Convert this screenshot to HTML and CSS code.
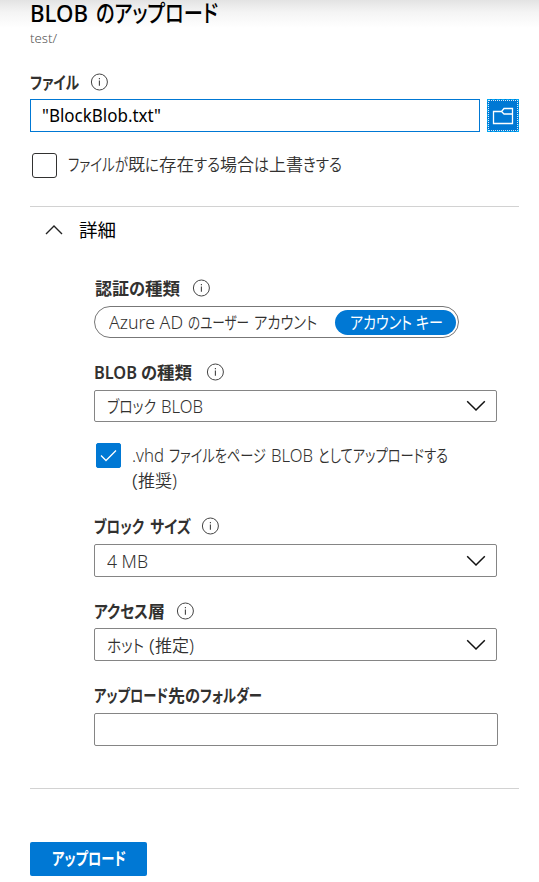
FILE: index.html
```html
<!DOCTYPE html>
<html lang="ja">
<head>
<meta charset="utf-8">
<title>BLOB のアップロード</title>
<link rel="stylesheet" href="styles.css">
</head>
<body>
<svg class="defs" aria-hidden="true">
  <symbol id="info" viewBox="0 0 18 18"><circle cx="9.4" cy="9" r="8" fill="none" stroke="#444" stroke-width="1"/><path d="M9.4 7.4V12.8M9.4 4.9V6.2" fill="none" stroke="#444" stroke-width="1.1"/></symbol>
  <symbol id="down" viewBox="0 0 20 12"><path d="M1.2 1.2L10 10L18.8 1.2" fill="none" stroke="#111" stroke-width="1.5"/></symbol>
</svg>
<main class="panel">
  <h1 class="line title"><span class="run" data-w="58">BLOB</span><span class="run" data-g="8" data-w="122">のアップロード</span></h1>
  <div class="line path"><span class="run" data-w="27">test/</span></div>

  <div class="line label file-label"><span class="run" data-w="49">ファイル</span><svg class="info" data-g="11"><use href="#info"/></svg></div>
  <div class="file-row">
    <div class="line file-input"><span class="run" data-w="119">"BlockBlob.txt"</span></div>
    <button class="browse" aria-label="参照"><svg class="folder" viewBox="0 0 22 18"><path d="M10 4.5H1.5V16.5H20.5V1.5H12L9.5 4.5L12 7H20.5" fill="none" stroke="#fff" stroke-width="1.3"/></svg></button>
  </div>
  <div class="check-row overwrite">
    <span class="box"></span>
    <div class="line"><span class="run" data-w="60">ファイルが</span><span class="run" data-w="17">既</span><span class="run" data-w="14">に</span><span class="run" data-w="35">存在</span><span class="run" data-w="26">する</span><span class="run" data-w="34">場合</span><span class="run" data-w="15">は</span><span class="run" data-w="34">上書</span><span class="run" data-w="39">きする</span></div>
  </div>

  <hr class="rule rule-top">
  <div class="line details"><svg class="up" viewBox="0 0 18 12"><path d="M1 10L9 2L17 10" fill="none" stroke="#222" stroke-width="1.4"/></svg><span class="run" data-w="37">詳細</span></div>

  <section class="section">
    <div class="line label auth-label"><span class="run" data-g="1" data-w="34">認証</span><span class="run" data-w="16">の</span><span class="run" data-w="35">種類</span><svg class="info" data-g="12"><use href="#info"/></svg></div>
    <div class="pill">
      <div class="line option"><span class="run" data-w="74">Azure AD</span><span class="run" data-g="5" data-w="61">のユーザー</span><span class="run" data-g="5" data-w="63">アカウント</span></div>
      <div class="line option selected"><span class="run" data-w="62">アカウント</span><span class="run" data-g="4" data-w="27">キー</span></div>
    </div>

    <div class="line label type-label"><span class="run" data-w="43">BLOB</span><span class="run" data-g="4" data-w="16">の</span><span class="run" data-w="35">種類</span><svg class="info" data-g="13.6"><use href="#info"/></svg></div>
    <div class="select short"><div class="line"><span class="run" data-w="49">ブロック</span><span class="run" data-g="5" data-w="42">BLOB</span></div><svg class="down"><use href="#down"/></svg></div>

    <div class="check-row vhd">
      <span class="box checked"><svg class="tick" viewBox="0 0 17 13"><path d="M1 6.5L6 11.5L16 1.5" fill="none" stroke="#fff" stroke-width="1.3"/></svg></span>
      <div>
        <div class="line"><span class="run" data-w="32">.vhd</span><span class="run" data-g="5" data-w="97">ファイルをページ</span><span class="run" data-g="5" data-w="42">BLOB</span><span class="run" data-g="5" data-w="130">としてアップロードする</span></div>
        <div class="line"><span class="run" data-w="6">(</span><span class="run" data-w="34">推奨</span><span class="run" data-w="5">)</span></div>
      </div>
    </div>

    <div class="line label size-label"><span class="run" data-w="50">ブロック</span><span class="run" data-g="6" data-w="41">サイズ</span><svg class="info" data-g="10"><use href="#info"/></svg></div>
    <div class="select"><div class="line"><span class="run" data-w="41">4 MB</span></div><svg class="down"><use href="#down"/></svg></div>

    <div class="line label tier-label"><span class="run" data-w="54">アクセス</span><span class="run" data-w="17">層</span><svg class="info" data-g="11"><use href="#info"/></svg></div>
    <div class="select tier"><div class="line"><span class="run" data-w="37">ホット</span><span class="run" data-g="5" data-w="6">(</span><span class="run" data-w="34">推定</span><span class="run" data-w="5">)</span></div><svg class="down"><use href="#down"/></svg></div>

    <div class="line label folder-label"><span class="run" data-w="74">アップロード</span><span class="run" data-w="17">先</span><span class="run" data-w="15">の</span><span class="run" data-w="62">フォルダー</span></div>
    <div class="folder-input"></div>
  </section>

  <hr class="rule rule-bottom">
  <button class="line upload"><span class="run" data-w="74">アップロード</span></button>
</main>
<script src="script.js"></script>
</body>
</html>
```
FILE: styles.css
```css
* { box-sizing: border-box; }
body {
  margin: 0;
  background: #fff linear-gradient(#e3e3e3, #f4f4f4 12px, #fff 28px) no-repeat;
  background-size: 100% 28px;
  font-family: "Noto Sans", "Noto Sans CJK JP", sans-serif;
  font-size: 17.5px;
  font-weight: 350;
  line-height: 24px;
  color: #323130;
}
button { border: 0; padding: 0; font: inherit; }
.defs { position: absolute; width: 0; height: 0; }
.panel { display: flow-root; width: 489px; height: 882px; margin-left: 30px; }
.line { display: flex; white-space: pre; font-feature-settings: "palt"; }
.run { flex: none; display: block; transform-origin: 0 50%; }
.label { font-weight: 600; align-items: center; }
.info { flex: none; width: 18px; height: 18px; }

.title { height: 29px; margin: 0; font-size: 24px; line-height: 26px; font-weight: 500; color: #000; }
.path { font-size: 13px; line-height: 18px; color: #555; }
.file-label { margin-top: 23px; }
.file-row { display: flex; justify-content: space-between; margin-top: 5px; }
.file-input { width: 450px; height: 33px; padding-left: 11px; border: 1px solid #0078d4; background: #fff; font-weight: 400; line-height: 31px; color: #000; }
.browse { display: flex; align-items: center; justify-content: center; position: relative; width: 32px; height: 33px; background: #0078d4; outline: 1px dashed #00a8f5; outline-offset: -1px; }
.browse::after { content: ""; position: absolute; inset: 1px; border: 1px dotted #d8ebf9; }
.folder { width: 22px; height: 18px; }

.check-row { display: flex; line-height: 25px; }
.box { flex: none; display: flex; align-items: center; justify-content: center; width: 25px; height: 25px; margin-left: 2px; border: 1px solid #323130; border-radius: 3px; }
.box.checked { border-color: #0078d4; background: #0078d4; border-radius: 2px; }
.tick { width: 17px; height: 13px; }
.overwrite { margin-top: 21px; line-height: 23px; }
.overwrite .line { margin-left: 11px; }
.rule { height: 1px; margin: 0; border: 0; background: #d2d2d2; }
.rule-top { margin-top: 28px; }
.details { align-items: center; height: 24px; margin-top: 11px; padding-left: 15px; font-size: 18px; font-weight: 400; color: #000; }
.up { width: 18px; height: 12px; margin-right: 16px; }

.section { margin-left: 64px; }
.auth-label { margin-top: 34px; }
.pill { display: flex; align-items: center; justify-content: space-between; width: 365px; height: 32px; margin-top: 6px; padding: 0 2px 0 14px; border: 1px solid #777; border-radius: 16px; }
.option { height: 25px; line-height: 25px; }
.selected { width: 121px; padding-left: 15px; border-radius: 13px; background: #0078d4; font-weight: 400; color: #fff; }
.type-label { margin-top: 22px; }
.select { display: flex; align-items: center; justify-content: space-between; width: 403px; height: 33px; margin-top: 6px; padding: 0 10px 0 12px; border: 1px solid #858585; border-radius: 2px; }
.short { height: 32px; }
.down { width: 20px; height: 12px; }
.vhd { margin-top: 21px; }
.vhd .line { margin-left: 11px; }
.size-label { margin-top: 21px; }
.tier-label { margin-top: 22px; }
.tier { margin-top: 5px; }
.folder-label { margin-top: 22px; }
.folder-input { width: 404px; height: 33px; margin-top: 6px; border: 1px solid #858585; border-radius: 2px; }
.rule-bottom { margin-top: 42px; }
.upload { width: 117px; height: 34px; margin-top: 53px; padding-left: 22px; border-radius: 2px; background: #0078d4; color: #fff; font-weight: 600; line-height: 33px; }
```
FILE: script.js
```js
// Condense each text run to its set advance width.
document.querySelectorAll('[data-g]').forEach(function (el) {
  el.style.marginLeft = el.dataset.g + 'px';
});
document.querySelectorAll('.run').forEach(function (el) {
  var natural = el.getBoundingClientRect().width;
  var target = Number(el.dataset.w);
  el.style.width = target + 'px';
  el.style.transform = 'scaleX(' + target / natural + ')';
});
```
